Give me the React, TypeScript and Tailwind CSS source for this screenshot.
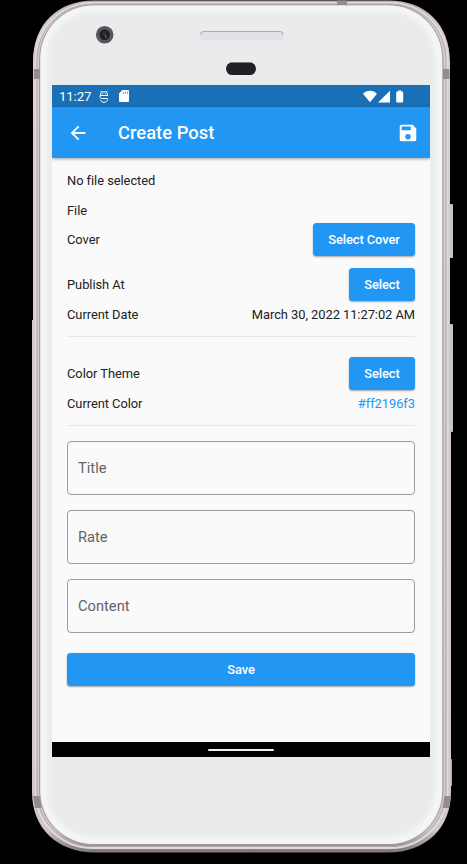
import React from "react";

function DeviceBody() {
  return (
    <svg className="absolute inset-0" width="467" height="864" viewBox="0 0 467 864" fill="none">
      <defs>
        <filter id="soft" x="-10%" y="-10%" width="120%" height="120%">
          <feGaussianBlur stdDeviation="2.5" />
        </filter>
        <linearGradient id="rim" x1="0" y1="0" x2="0" y2="864" gradientUnits="userSpaceOnUse">
          <stop offset="0" stopColor="#b5abb0" />
          <stop offset="0.03" stopColor="#d6cdd1" />
          <stop offset="0.96" stopColor="#cfc7cb" />
          <stop offset="0.986" stopColor="#7d767b" />
        </linearGradient>
        <clipPath id="face">
          <rect x="40.500" y="5.500" width="401.500" height="838.500" rx="53" />
        </clipPath>
      </defs>
      {/* side keys */}
      <rect x="448" y="204" width="5" height="54" rx="1" fill="#c3c5c4" />
      <rect x="448" y="324" width="5" height="108" rx="1" fill="#c3c5c4" />
      <rect x="448" y="759" width="4" height="27" rx="1" fill="#b5b0b3" />
      {/* metal rim */}
      <path
        d="M33 62C33 24 58 .5 94 .5H389C425 .5 450 24 450 62V432H451V792C451 828 426 852.500 388 852.500H95C57 852.500 32 828 32 792V320H33Z"
        fill="url(#rim)"
      />
      <rect x="35.500" y="3" width="412" height="845" rx="57" stroke="#e0d8dc" strokeWidth="2" />
      <rect x="37" y="4" width="409" height="842.500" rx="55.500" stroke="#b3aaaf" />
      <rect x="39.500" y="4.800" width="403.500" height="840" rx="54" stroke="#a59da2" />
      <path d="M34 69h6v10h-6zM443 69h6.500v10h-6.500zM337 .5h10v5h-10zM33 796h6.500l2 12h-6.500zM451 796h-6.500l-2 12h6.500z" fill="#948b90" />
      {/* front glass with a brighter edge */}
      <g clipPath="url(#face)">
        <rect x="40" y="5" width="402" height="839" fill="#eaebed" />
        <rect x="43" y="8" width="396" height="833" rx="51" stroke="#f6f7f9" strokeWidth="7" filter="url(#soft)" />
      </g>
      {/* camera */}
      <circle cx="104.700" cy="34.700" r="8.800" fill="#55575b" />
      <circle cx="104.700" cy="34.700" r="5.200" fill="#1c1e21" />
      <circle cx="104.300" cy="33.500" r="2.400" fill="#2b2d38" />
      <path d="M105 35l1.200 3" stroke="#7d7748" />
      {/* speaker */}
      <rect x="200" y="31" width="83.500" height="9" rx="4" fill="#dfe1e5" />
      <path d="M200.500 35v-.5a3 3 0 0 1 3-3h76.500a3 3 0 0 1 3 3v.5" stroke="#a6abb3" />
      {/* proximity sensor */}
      <rect x="226" y="62.300" width="30" height="12.700" rx="6.300" fill="#1f2125" />
      <path d="M231 62.500h20" stroke="#76797c" />
    </svg>
  );
}

function StatusBar() {
  return (
    <div className="flex h-[22px] shrink-0 items-center bg-[#1a70b7] pr-[25px] pl-[7px] text-white">
      <span className="w-[40px] pt-px text-[13.2px] leading-[21px] tracking-[-0.1px]">11:27</span>
      <svg width="10" height="13" viewBox="0 0 10 13" fill="none" stroke="currentColor">
        <path d="M1.500 5.500V4.200C1.500 2.500 2.800 1.800 5 1.800S8.500 2.500 8.500 4.200V5.500M1.500 .8l1.200 1.400M8.500 .8 7.300 2.200M1 5.500v1.200c0 1.200.8 1.800 2 1.800h5.500v1c0 1.700-1.500 2.800-3.500 2.800S1.500 11.200 1.500 9.800M1 5.500h8" />
        <path d="M3.200 3.800h1M5.900 3.800h1" />
      </svg>
      <svg className="ml-[10px]" width="10" height="12" viewBox="0 0 10 12">
        <path fill="currentColor" fillRule="evenodd" d="M3.500 0H9a1 1 0 0 1 1 1v10a1 1 0 0 1-1 1H1a1 1 0 0 1-1-1V3.500ZM4 1.700v2h.7V1.700ZM6 1.700v2h.7V1.700ZM8 1.700v2h.7V1.700Z" />
      </svg>
      <svg className="ml-auto" width="42" height="13" viewBox="0 0 42 13" fill="currentColor">
        <path d="M0 3.800C3.700-.2 10.300-.2 14 3.800L7 12.300ZM15 12.500 27 .7v11.800ZM33.200 2.500a1 1 0 0 1 1-1h1V.5h3v1h1a1 1 0 0 1 1 1v9a1 1 0 0 1-1 1h-5a1 1 0 0 1-1-1Z" />
      </svg>
    </div>
  );
}

function AppBar() {
  return (
    <header className="relative flex h-[51px] shrink-0 items-center bg-[#2196f3] pr-[11px] pl-[15px] text-white shadow-[0_1px_3px_rgba(0,0,0,0.35)]">
      <svg width="22" height="22" viewBox="0 0 24 24" fill="currentColor">
        <path d="M20 11H7.830l5.590-5.590L12 4l-8 8 8 8 1.410-1.410L7.830 13H20v-2z" />
      </svg>
      <h1 className="ml-[29px] pt-px text-[18.400px] font-medium tracking-[0px]">Create Post</h1>
      <svg className="ml-auto" width="22" height="22" viewBox="0 0 24 24" fill="currentColor">
        <path d="M17 3H5a2 2 0 0 0-2 2v14a2 2 0 0 0 2 2h14a2 2 0 0 0 2-2V7l-4-4zm-5 16a3 3 0 1 1 0-6 3 3 0 0 1 0 6zm3-10H5V5h10v4z" />
      </svg>
    </header>
  );
}

function Button({ children, className = "" }: { children: React.ReactNode; className?: string }) {
  return (
    <button
      className={`flex h-[33px] items-center justify-center rounded-[3.500px] bg-[#2196f3] text-[12.900px] font-medium tracking-[-0.080px] text-white shadow-[0_1px_2px_rgba(0,0,0,0.35)] ${className}`}
    >
      {children}
    </button>
  );
}

function Row({ label, children, className = "" }: { label: string; children?: React.ReactNode; className?: string }) {
  return (
    <div className={`flex items-center justify-between ${className}`}>
      <span>{label}</span>
      {children}
    </div>
  );
}

function Field({ label }: { label: string }) {
  return (
    <div className="flex h-[54px] items-center rounded-[4px] border border-[#9b9b9b] pl-[10px] text-[14.700px] tracking-[0px] text-[#646464]">
      {label}
    </div>
  );
}

export default function App() {
  return (
    <div className="relative h-[864px] w-[467px] overflow-hidden bg-black pt-[85px] pl-[52px] font-[Roboto,sans-serif]">
      <DeviceBody />
      <div className="relative flex h-[672px] w-[378px] flex-col overflow-hidden bg-[#fafafa]">
        <StatusBar />
        <AppBar />
        <main className="flex flex-1 flex-col px-[15px] pt-[15px] text-[12.900px] leading-[15px] tracking-[-0.050px] text-[#212121]">
          <Row label="No file selected" className="h-[15px]" />
          <Row label="File" className="mt-[15px] h-[15px]" />
          <Row label="Cover" className="mt-[5px] h-[33px]">
            <Button className="w-[102px]">Select Cover</Button>
          </Row>
          <Row label="Publish At" className="mt-[12px] h-[33px]">
            <Button className="w-[66px]">Select</Button>
          </Row>
          <Row label="Current Date" className="mt-[6px] h-[15px]">
            <span>March 30, 2022 11:27:02 AM</span>
          </Row>
          <div className="mt-[14px] h-px bg-[#e8e8e8]" />
          <Row label="Color Theme" className="mt-[20px] h-[33px]">
            <Button className="w-[66px]">Select</Button>
          </Row>
          <Row label="Current Color" className="mt-[6px] h-[15px]">
            <span className="text-[#2196f3]">#ff2196f3</span>
          </Row>
          <div className="mt-[14px] h-px bg-[#e8e8e8]" />
          <div className="mt-[15px] flex flex-col gap-[15px]">
            <Field label="Title" />
            <Field label="Rate" />
            <Field label="Content" />
          </div>
          <Button className="mt-[20px] w-full">Save</Button>
        </main>
        <div className="flex h-[15px] shrink-0 items-center justify-center bg-black">
          <div className="mt-px h-[2px] w-[66px] rounded-full bg-[#f1f1f1]" />
        </div>
      </div>
    </div>
  );
}
